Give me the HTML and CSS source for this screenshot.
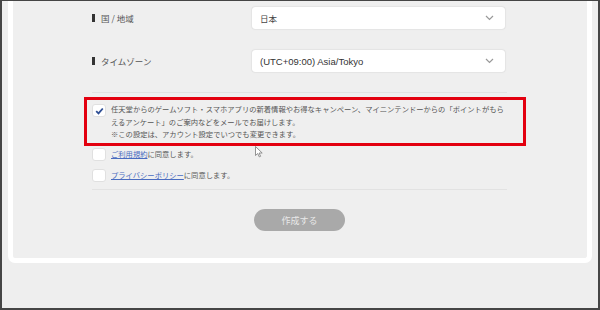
FILE: index.html
```html
<!DOCTYPE html>
<html lang="ja">
<head>
<meta charset="utf-8">
<link rel="stylesheet" href="styles.css">
</head>
<body>
<div class="frame">
  <div class="card">
    <div class="fields">
      <div class="row">
        <div class="label"><span class="mark"></span>国 / 地域</div>
        <div class="select"><span>日本</span>
          <svg class="chev" width="9" height="6" viewBox="0 0 9 6"><path d="M1 1l3.5 3.5L8 1" fill="none" stroke="#999" stroke-width="1.2"/></svg>
        </div>
      </div>
      <div class="row">
        <div class="label"><span class="mark"></span>タイムゾーン</div>
        <div class="select latin"><span>(UTC+09:00) Asia/Tokyo</span>
          <svg class="chev" width="9" height="6" viewBox="0 0 9 6"><path d="M1 1l3.5 3.5L8 1" fill="none" stroke="#999" stroke-width="1.2"/></svg>
        </div>
      </div>
    </div>
    <div class="divider"></div>
    <div class="consents">
      <div class="check-row first">
        <span class="box checked">
          <svg width="9" height="8" viewBox="0 0 9 8"><path d="M1.2 4.2l2.3 2.2L7.8 1.5" fill="none" stroke="#2f4f95" stroke-width="1.8"/></svg>
        </span>
        <p class="text">任天堂からのゲームソフト・スマホアプリの新着情報やお得なキャンペーン、マイニンテンドーからの「ポイントがもらえるアンケート」のご案内などをメールでお届けします。<br>※この設定は、アカウント設定でいつでも変更できます。</p>
        <div class="highlight"></div>
      </div>
      <div class="check-row">
        <span class="box"></span>
        <p class="text"><a class="link">ご利用規約</a>に同意します。</p>
      </div>
      <div class="check-row">
        <span class="box"></span>
        <p class="text"><a class="link">プライバシーポリシー</a>に同意します。</p>
      </div>
      <svg class="cursor" width="8" height="12" viewBox="0 0 8 12"><path d="M0.5 0.5v9l2.2-2 1.6 3.4 1.3-.6-1.5-3.3h3.1z" fill="#fff" stroke="#777" stroke-width="0.8" stroke-linejoin="round"/></svg>
    </div>
    <div class="divider tight"></div>
    <div class="actions">
      <button class="btn" type="button">作成する</button>
    </div>
  </div>
</div>
</body>
</html>
```

FILE: styles.css
```css
* { box-sizing: border-box; }
html, body { margin: 0; padding: 0; }
body {
  width: 600px;
  height: 310px;
  overflow: hidden;
  font-family: "Noto Sans CJK JP", "Noto Sans", sans-serif;
  color: #555;
}
.frame {
  width: 600px;
  height: 310px;
  border: 2px solid #454545;
  border-top-width: 1px;
  background: #eeeeee;
  padding: 0 6px;
  overflow: hidden;
}
.card {
  background: #efefef;
  border: 5px solid #fff;
  border-top: 0;
  border-radius: 0 0 7px 7px;
  padding: 6px 80px 27px 79px;
}
.fields {
  display: flex;
  flex-direction: column;
  gap: 21px;
}
.row {
  display: flex;
  align-items: center;
  height: 22px;
}
.label {
  width: 160px;
  display: flex;
  align-items: center;
  font-size: 8.5px;
  color: #555;
}
.mark {
  width: 3px;
  height: 8px;
  background: #333;
  margin-right: 6px;
}
.select {
  width: 253px;
  height: 22px;
  background: #fff;
  border-radius: 3px;
  box-shadow: 0 0 1.5px rgba(0,0,0,0.22);
  display: flex;
  align-items: center;
  justify-content: space-between;
  padding: 0 11px 0 8px;
  font-size: 8.5px;
  color: #444;
}
.select.latin {
  font-family: "Liberation Sans", Arial, sans-serif;
  font-size: 9.5px;
  color: #333;
}
.divider {
  height: 1px;
  background: #e2e2e2;
  margin-top: 20px;
}
.divider.tight {
  margin-top: -1px;
}
.consents {
  position: relative;
  margin-top: 4px;
  display: flex;
  flex-direction: column;
}
.check-row {
  position: relative;
  display: flex;
  align-items: flex-start;
  height: 21px;
}
.check-row.first {
  padding-top: 7px;
  height: auto;
  margin-bottom: 7.5px;
}
.box {
  flex: none;
  width: 14px;
  height: 13px;
  background: #fff;
  border: 1px solid #e0e0e0;
  border-radius: 3px;
  display: flex;
  align-items: center;
  justify-content: center;
}
.text {
  margin: -1px 0 0 5px;
  font-size: 7.3px;
  line-height: 12.5px;
  color: #555;
  width: 396px;
}
.check-row:not(.first) .text {
  line-height: 13px;
  margin-top: 0;
}
.link {
  color: #4a6cc0;
  text-decoration: underline;
}
.highlight {
  position: absolute;
  left: -8px;
  top: 0;
  width: 442px;
  height: 49px;
  border: 3px solid #e3000f;
}
.cursor {
  position: absolute;
  left: 163px;
  top: 49px;
}
.actions {
  display: flex;
  justify-content: center;
  padding-top: 19px;
}
.btn {
  width: 91px;
  height: 22px;
  border: 0;
  border-radius: 11px;
  background: #a9a9a9;
  color: #e8e8e8;
  font-family: "Noto Sans CJK JP", sans-serif;
  font-size: 9px;
  padding: 0;
}
```
